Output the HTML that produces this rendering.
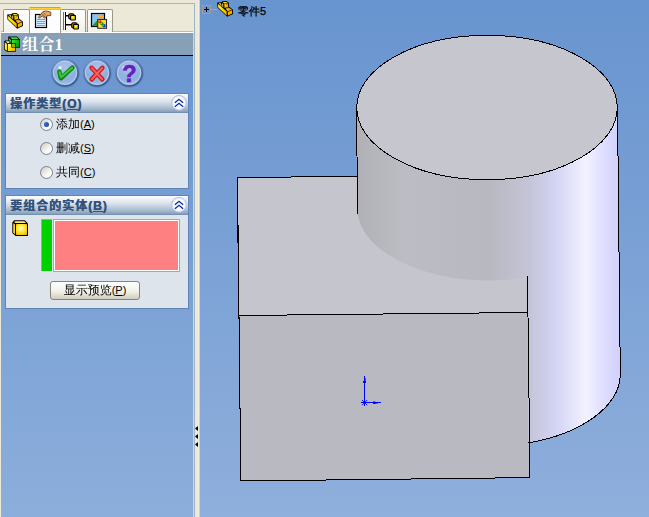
<!DOCTYPE html>
<html><head><meta charset="utf-8">
<style>
html,body{margin:0;padding:0;}
body{width:649px;height:517px;overflow:hidden;position:relative;background:#ECE9D8;font-family:"Liberation Sans","WenQuanYi Zen Hei","Noto Sans CJK SC",sans-serif;font-size:12px;color:#000;}
.abs{position:absolute;}
#vp{left:200px;top:0;width:449px;height:517px;}
#panel{left:1px;top:33px;width:192px;height:484px;background:linear-gradient(#6B96D0 0px,#6B96D0 23px,#8CAEDB 484px);}
#hdr{left:0;top:0;width:192px;height:22px;background:#86A0B8;border-bottom:1px solid #000;}
#hdr .t{left:21px;top:2px;letter-spacing:0.4px;font-family:"Liberation Serif","Noto Serif CJK SC",serif;font-size:16px;font-weight:bold;color:#fff;line-height:20px;white-space:nowrap;}
.gb{background:#DEE4EC;box-shadow:0 0 0 1px #5E84B9;}
.gbt{left:0;top:0;height:19px;background:linear-gradient(#FBFCFD,#DCE4EC 38%,#A9BCCF 75%,#8AA2BC 92%,#6987AC);}
.gbt .t{left:4px;top:3px;letter-spacing:1px;font-family:"Liberation Sans","Noto Sans CJK SC",sans-serif;font-size:12px;font-weight:bold;color:#33517B;text-shadow:0.4px 0 0 #33517B;line-height:15px;white-space:nowrap;}
.radio{width:11px;height:11px;border-radius:50%;border:1px solid #76808C;background:linear-gradient(135deg,#D2D2CA 10%,#F4F4F0 55%,#FFFFFF 80%);}
.lbl span,.pbtn span{font-size:11px;}
.lbl{font-size:12px;line-height:14px;white-space:nowrap;}
.tab{border:1px solid #97978B;border-bottom:none;border-radius:2px 2px 0 0;background:linear-gradient(#FFFFFF,#F1F0EA);}
</style></head><body>
<svg width="0" height="0" style="position:absolute">
<defs>
<symbol id="part" viewBox="0 0 16 16">
  <path d="M0.2,1.6 L4.3,1.2 L5.4,0.2 L9.3,0.1 L11.7,1.6 L12,5.6 L16,8.7 L16,13 L10.2,15.8 L0.5,6.6 Z" fill="#000"/>
  <path d="M1.1,2.9 L9.7,10.6 L9.7,14.6 L1.1,6.3 Z" fill="url(#partF)"/>
  <path d="M10.9,10.9 L15.1,9.2 L15.1,12.6 L10.9,14.6 Z" fill="#F0B000"/>
  <path d="M8.6,7.5 L11.5,6.4 L15,8.7 L10.8,10.4 Z" fill="#E8B020"/>
  <path d="M7.2,2.9 L10.8,2.6 L11.2,5.9 L7.5,7 Z" fill="#F2BA00"/>
  <path d="M5.9,1.1 L9.3,0.9 L10.8,2 L7.1,2.4 Z" fill="#FFE410"/>
  <path d="M5.3,2.4 L6.2,2.5 L6.2,6.2 L5.3,5.4 Z" fill="#FFF8C0"/>
  <path d="M1.6,2.2 L3.6,2 L4.4,4 L4.6,5.4 Z" fill="#F8C800"/>
  <rect x="9.3" y="2.9" width="0.9" height="0.7" fill="#604000"/><rect x="10" y="6.6" width="0.9" height="0.7" fill="#604000"/><rect x="12.2" y="9.2" width="0.9" height="0.7" fill="#604000"/>
</symbol>
<linearGradient id="partF" x1="0" y1="0" x2="0.4" y2="1"><stop offset="0" stop-color="#FFFF30"/><stop offset="0.5" stop-color="#FFE000"/><stop offset="1" stop-color="#F0B400"/></linearGradient>
<radialGradient id="glass" cx="0.5" cy="0.3" r="0.75">
  <stop offset="0" stop-color="#A9C4EA"/><stop offset="0.6" stop-color="#8DB0E0"/><stop offset="1" stop-color="#9FC0EC"/>
</radialGradient>
<linearGradient id="ring" x1="0.2" y1="0" x2="0.8" y2="1">
  <stop offset="0" stop-color="#7492C2"/><stop offset="1" stop-color="#38558A"/>
</linearGradient>
<linearGradient id="gcube" x1="0" y1="0" x2="1" y2="1"><stop offset="0" stop-color="#50F050"/><stop offset="0.5" stop-color="#10B818"/><stop offset="1" stop-color="#069010"/></linearGradient>
<linearGradient id="ycubeL" x1="0" y1="0" x2="1" y2="0"><stop offset="0" stop-color="#FFF070"/><stop offset="1" stop-color="#FFD000"/></linearGradient>
<radialGradient id="ycubeR" cx="0.45" cy="0.4" r="0.75"><stop offset="0" stop-color="#FFFFD8"/><stop offset="0.55" stop-color="#FFE020"/><stop offset="1" stop-color="#F8B000"/></radialGradient>
<radialGradient id="colb" cx="0.5" cy="0.5" r="0.5"><stop offset="0.6" stop-color="#FFFFFF"/><stop offset="1" stop-color="#E4E8F8"/></radialGradient>
<linearGradient id="ycube" x1="0" y1="0" x2="1" y2="1"><stop offset="0" stop-color="#FFFFC0"/><stop offset="0.5" stop-color="#FFE000"/><stop offset="1" stop-color="#F0A000"/></linearGradient>
</defs>
</svg>
<!-- top frame lines -->
<div class="abs" style="left:0;top:3px;width:195px;height:1px;background:#9FB6C2"></div>
<div class="abs" style="left:193px;top:33px;width:1px;height:484px;background:#DAD6C0"></div>
<div class="abs" style="left:194px;top:3px;width:1px;height:514px;background:#9FB6C2"></div>
<div class="abs" style="left:195px;top:0;width:5px;height:517px;background:linear-gradient(90deg,#ECE9D8 0,#ECE9D8 3px,#F3EDDD 3px,#F3EDDD 4px,#C9D2CF 4px)"></div>
<!-- tabs -->
<div class="abs" style="left:1px;top:31px;width:192px;height:1px;background:#BEBCB0"></div>
<div class="abs" style="left:1px;top:32px;width:192px;height:1px;background:#fff"></div>
<div class="abs tab" style="left:3px;top:9px;width:25px;height:22px;"></div>
<div class="abs tab" style="left:60px;top:9px;width:24px;height:22px;"></div>
<div class="abs tab" style="left:87px;top:9px;width:24px;height:22px;"></div>
<div class="abs" style="left:29px;top:7px;width:30px;height:26px;border:1px solid #97978B;border-bottom:none;border-top:none;border-radius:2px 2px 0 0;background:#FDFDFE"></div>
<div class="abs" style="left:29px;top:7px;width:32px;height:3px;border-radius:2px 2px 0 0;background:linear-gradient(#E59A22 0,#E59A22 1px,#FFD332 1px,#FFD332 2px,#FFB52A 2px)"></div>
<!-- tab icons -->
<svg class="abs" style="left:7px;top:13px" width="16" height="16"><use href="#part"/></svg>
<svg class="abs" style="left:34px;top:10px" width="18" height="19" viewBox="34 10 18 19">
  <rect x="35.5" y="14.5" width="11" height="13" fill="#D6EBFF" stroke="#000" stroke-width="1.2"/>
  <path d="M37,19.5 h8 M37,21.5 h8 M37,23.5 h8 M37,25.5 h8" stroke="#5FA4FF" stroke-width="1"/>
  <path d="M38.3,17.5 L43,11.5 L46.5,11 L50.8,12.2 L50.8,15.5 L47,15.8 L44.5,18.3 L42.5,15.8 L39.5,18 Z" fill="#E2A868" stroke="#7A3E0A" stroke-width="0.9" stroke-linejoin="round"/>
  <path d="M42,13.5 l3,3.5 M43.5,12.5 l2.5,3" stroke="#7A3E0A" stroke-width="0.6"/>
</svg>
<svg class="abs" style="left:62px;top:11px" width="20" height="20" viewBox="62 11 20 20">
  <path d="M63.5,12 V30" stroke="#707070" stroke-width="1"/>
  <path d="M65.5,12 V30" stroke="#000" stroke-width="1"/>
  <path d="M66,15.5 h3 M66,24.5 h6" stroke="#000" stroke-width="1"/>
  <path d="M66,16.5 h3 M66,25.5 h6" stroke="#808080" stroke-width="1"/>
  <rect x="68.8" y="13.8" width="5" height="5" rx="1.3" fill="#FFC000" stroke="#000" stroke-width="1.3"/>
  <rect x="70.6" y="15.4" width="4.8" height="4.6" rx="0.8" fill="url(#ycube)" stroke="#000" stroke-width="1.2"/>
  <rect x="71.8" y="22.8" width="5" height="5" rx="1.3" fill="#FFC000" stroke="#000" stroke-width="1.3"/>
  <rect x="73.6" y="24.4" width="4.8" height="4.6" rx="0.8" fill="url(#ycube)" stroke="#000" stroke-width="1.2"/>
</svg>
<svg class="abs" style="left:90px;top:12px" width="18" height="18" viewBox="90 12 18 18">
  <rect x="91.5" y="13.5" width="13" height="13" fill="#86C4F4" stroke="#000" stroke-width="1.2"/>
  <path d="M92,26 L98,19.5 L99,26 Z" fill="#20A020"/>
  <circle cx="101" cy="16.8" r="1.9" fill="#FF9A10"/>
  <path d="M101,13.8 v6 M98,16.8 h6" stroke="#FFB030" stroke-width="1"/>
  <rect x="97.7" y="19.5" width="8.8" height="8.8" fill="#FFE020" stroke="#303030" stroke-width="1.1"/>
  <circle cx="99.8" cy="21.6" r="1.7" fill="#F02020"/>
  <circle cx="101.9" cy="23.7" r="1.7" fill="#10A010"/>
  <circle cx="104.1" cy="25.8" r="1.7" fill="#1040D0"/>
  <circle cx="99.4" cy="21.1" r="0.5" fill="#fff"/><circle cx="101.5" cy="23.2" r="0.5" fill="#C0FFC0"/><circle cx="103.7" cy="25.3" r="0.5" fill="#C0D0FF"/>
</svg>
<!-- panel -->
<div id="panel" class="abs">
  <div id="hdr" class="abs"><div class="abs t">组合1</div>
  <svg class="abs" style="left:3px;top:3px" width="18" height="17" viewBox="4 36 18 17">
    <path d="M8.3,36.4 H17 L19.9,39.3 V47.8 H11.3 V42.8 L8.3,41 Z" fill="#000"/>
    <path d="M9.9,37.2 H16.8 L18.8,39.3 H12 Z" fill="#2CE02C"/>
    <path d="M9.1,38 L11.2,40.2 V42.3 L9.1,40.8 Z" fill="#30E830"/>
    <rect x="12" y="40.1" width="7.1" height="6.9" fill="url(#gcube)"/>
    <path d="M4.1,41.6 L5.2,40.5 H9.6 L10.6,43.2 H15.8 V51.7 H7.1 L4.1,49.7 Z" fill="#000"/>
    <path d="M5.6,41.2 H9.2 L9.8,42.6 L7.6,43.3 Z" fill="#FFF4A0"/>
    <path d="M4.8,42.2 L7.1,44 V50.8 L4.8,49.2 Z" fill="url(#ycubeL)"/>
    <rect x="7.9" y="43.9" width="7.2" height="7.1" fill="url(#ycube)"/>
    <rect x="11.3" y="43.9" width="3.8" height="3.7" fill="#000"/>
    <rect x="12" y="43.9" width="3.1" height="3.1" fill="#8CB800"/>
  </svg>
  </div>
  <!-- OK / cancel / help -->
  <svg class="abs" style="left:49px;top:24px" width="96" height="32" viewBox="50 57 96 32">
    <g id="b1">
      <circle cx="65.3" cy="73.3" r="13.6" fill="none" stroke="#4A6898" stroke-width="1.6" opacity="0.35"/>
      <circle cx="65" cy="72.8" r="13.1" fill="url(#glass)" stroke="url(#ring)" stroke-width="1.7"/>
      <circle cx="65" cy="72.8" r="11.6" fill="none" stroke="#C4D8F4" stroke-width="1" opacity="0.75"/>
      <circle cx="60" cy="67.5" r="1.6" fill="#fff" opacity="0.9"/>
    </g>
    <use href="#b1" x="32"/>
    <use href="#b1" x="64.1"/>
    <path d="M59.3,71.8 L60.9,78.3 L72.4,67.6" fill="none" stroke="#0C8A0C" stroke-width="4.5" stroke-linecap="round" stroke-linejoin="round"/>
    <path d="M59.5,72.3 L61.1,77.3 L72.2,67.8" fill="none" stroke="#3CC83C" stroke-width="2" stroke-linecap="round" stroke-linejoin="round"/>
    <path d="M91.6,67.8 L102.4,79.4 M102.4,67.8 L91.6,79.4" fill="none" stroke="#D01818" stroke-width="4.5" stroke-linecap="round"/>
    <path d="M91.8,68 L102.2,79.2 M102.2,68 L91.8,79.2" fill="none" stroke="#F26060" stroke-width="2" stroke-linecap="round"/>
    <text x="129.4" y="82.2" text-anchor="middle" font-family="'Liberation Sans',sans-serif" font-weight="bold" font-size="23.5" fill="#6A1EC0" stroke="#6A1EC0" stroke-width="0.7">?</text>
  </svg>
  <!-- group 1 -->
  <div class="abs gb" style="left:5px;top:61px;width:182px;height:94px;">
    <div class="abs gbt" style="width:182px;"><div class="abs t">操作类型(<u>O</u>)</div></div>
    <svg class="abs" style="left:165px;top:1px" width="16" height="16" viewBox="0 0 16 16"><circle cx="8" cy="7.8" r="7.4" fill="url(#colb)" stroke="#B4BCE6" stroke-width="1"/><path d="M3.9,7.7 L8,4.3 L12.1,7.7 M3.9,11.7 L8,8.3 L12.1,11.7" fill="none" stroke="#0C2CA8" stroke-width="1.4"/></svg>
    <div class="abs radio" style="left:34px;top:24px;"></div>
    <div class="abs" style="left:38px;top:28px;width:5px;height:5px;border-radius:50%;background:radial-gradient(circle at 40% 40%,#3868E0,#1C3CA8)"></div>
    <div class="abs lbl" style="left:50px;top:23px;">添加<span>(<u>A</u>)</span></div>
    <div class="abs radio" style="left:34px;top:48px;"></div>
    <div class="abs lbl" style="left:50px;top:47px;">删减<span>(<u>S</u>)</span></div>
    <div class="abs radio" style="left:34px;top:72px;"></div>
    <div class="abs lbl" style="left:50px;top:71px;">共同<span>(<u>C</u>)</span></div>
  </div>
  <!-- group 2 -->
  <div class="abs gb" style="left:5px;top:163px;width:182px;height:112px;">
    <div class="abs gbt" style="width:182px;"><div class="abs t">要组合的实体(<u>B</u>)</div></div>
    <svg class="abs" style="left:165px;top:1px" width="16" height="16" viewBox="0 0 16 16"><circle cx="8" cy="7.8" r="7.4" fill="url(#colb)" stroke="#B4BCE6" stroke-width="1"/><path d="M3.9,7.7 L8,4.3 L12.1,7.7 M3.9,11.7 L8,8.3 L12.1,11.7" fill="none" stroke="#0C2CA8" stroke-width="1.4"/></svg>
    <svg class="abs" style="left:6px;top:24px" width="17" height="17" viewBox="0 0 17 17">
      <path d="M0.3,2.6 L2.2,0.3 H12.8 L16,3.4 V16 H3.6 L0.3,13 Z" fill="#000"/>
      <path d="M2.2,2.2 L3,1.3 H12.4 L14,3 H3.6 Z" fill="#FFEE70"/>
      <path d="M1.3,3.2 L3,4.4 V14.2 L1.3,12.6 Z" fill="url(#ycubeL)"/>
      <rect x="4" y="4" width="11" height="11" rx="0.8" fill="url(#ycubeR)"/>
    </svg>
    <div class="abs" style="left:35px;top:23px;width:10px;height:51px;border-left:1px solid #A9A3A3;border-top:1px solid #A9A3A3;background:#00D000"></div>
    <div class="abs" style="left:47px;top:23px;width:125px;height:51px;border:1px solid #A8A8A6;box-shadow:inset 0 0 0 1px #fff;background:#FF8080"></div>
    <div class="abs" style="left:44px;top:85px;width:88px;height:17px;border:1px solid #85857C;border-radius:3px;background:linear-gradient(#FFFFFF,#F2F1EA 55%,#D2CCBE);text-align:center;line-height:16px;font-size:12px;">显示预览<span style="font-size:11px">(<u>P</u>)</span></div>
  </div>
</div>
<!-- viewport -->
<svg id="vp" class="abs" width="449" height="517" viewBox="200 0 449 517">
<defs>
<linearGradient id="bg" x1="0" y1="0" x2="0" y2="1"><stop offset="0" stop-color="#6894CF"/><stop offset="1" stop-color="#8FAFDC"/></linearGradient>
<linearGradient id="cyl" gradientUnits="userSpaceOnUse" x1="357" y1="0" x2="620" y2="0">
<stop offset="0" stop-color="#B0B0B6"/>
<stop offset="0.18" stop-color="#BCBCC4"/>
<stop offset="0.5" stop-color="#B8B8C0"/>
<stop offset="0.65" stop-color="#C4C4D6"/>
<stop offset="0.75" stop-color="#D2D2F4"/>
<stop offset="0.87" stop-color="#F2F2FF"/>
<stop offset="0.93" stop-color="#E0E0FF"/>
<stop offset="1" stop-color="#D0D0FC"/>
</linearGradient>
</defs>
<rect x="200" y="0" width="449" height="517" fill="url(#bg)"/>
<polygon points="237.5,177.5 400,176 527.5,175 527.5,312.5 239,315.5" fill="#C5C5CD"/>
<polygon points="239,315.5 527.5,312.5 530,477.6 240.8,481" fill="#B9B9C1"/>
<path d="M356.5,107 L357,208 A131.5,72.5 0 0 0 527.5,277.2 L528,443 A131.5,72.5 0 0 0 620.3,375 L617.5,107 Z" fill="url(#cyl)"/>
<ellipse cx="487" cy="107.5" rx="130.3" ry="72.2" fill="#C6C6CE"/>
<g fill="none" stroke="#000" stroke-width="1" shape-rendering="crispEdges">
<ellipse cx="487" cy="107.5" rx="130.3" ry="72.2"/>
<path d="M356.5,107 L357.6,214"/>
<path d="M617.5,107 L620.3,375 A131.5,72.5 0 0 1 528,443"/>
<path d="M357,176.4 L237.5,177.5 L239,315.5 L240.8,481 L530,477.6 L527.5,276"/>
<path d="M239,315.5 L527.5,312.5"/>
<path d="M237.5,177.5 L238.6,319"/>
</g>
<g stroke="#0000FF" stroke-width="1" fill="none">
<path d="M364.5,376 V406 M361,402.5 H381" shape-rendering="crispEdges"/>
<path d="M362,400 L367.2,405.2 M362,405.2 L367.2,400" stroke-width="0.9"/>
<path d="M363,381 h3 v2 h-3z M373,401.5 h2.5 v2.5 h-2.5z" fill="#0000FF" stroke="none"/>
<path d="M364,378 h1.6 v3 h-1.6z M375,402 h3 v1.6 h-3z" fill="#0000FF" stroke="none"/>
</g>
<rect x="202.5" y="5.5" width="8" height="8" fill="none" stroke="#A89E88" stroke-width="1"/>
<path d="M211,9.5 h6" stroke="#B0A690" stroke-width="1"/>
<path d="M204,9.5 h5 M206.5,7 v5" stroke="#000" stroke-width="1"/>
<use href="#part" x="217" y="1" width="16" height="16"/>
<text x="238" y="15" font-size="11" font-family="'Liberation Sans','WenQuanYi Zen Hei','Noto Sans CJK SC',sans-serif" fill="#000" stroke="#000" stroke-width="0.25">零件5</text>
</svg>
<!-- splitter arrows -->
<svg class="abs" style="left:194px;top:424px" width="6" height="26" viewBox="0 0 6 26"><path d="M4,2 v5 l-3,-2.5z M4,10 v5 l-3,-2.5z M4,18 v5 l-3,-2.5z" fill="#000"/></svg>
</body></html>
